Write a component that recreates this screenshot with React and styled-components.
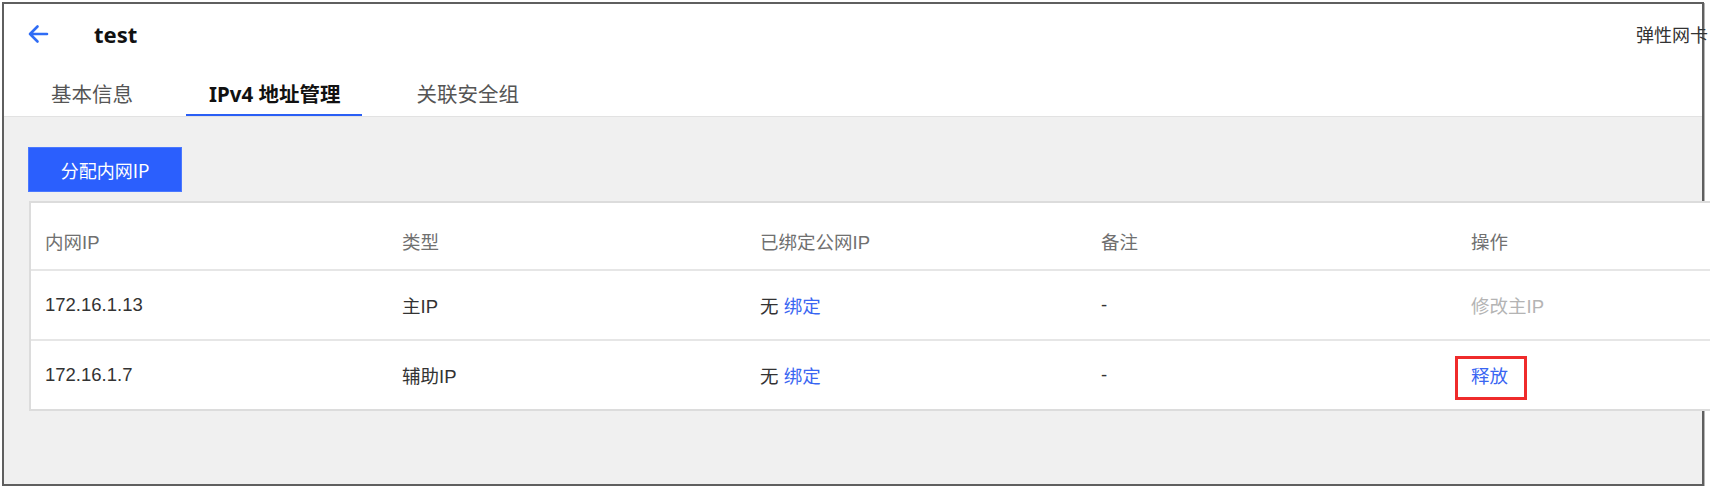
import styled, {createGlobalStyle} from "styled-components";

const GlobalStyle = createGlobalStyle`
    body {
        margin: 0;
        background: #ffffff;
        font-family: "Liberation Sans", "Noto Sans CJK SC", sans-serif;
        overflow: hidden;
    }
`

const Frame = styled.div`
    margin: 2px 0 0 2px;
    width: 1702px;
    height: 484px;
    box-sizing: border-box;
    border: 2px solid #5f5f5f;
    box-shadow: 1px 1px 0 #b5b5b5;
    display: flex;
    flex-direction: column;
    background: #f0f0f0;
`
const Header = styled.div`
    background: #fff;
    border-bottom: 1px solid #e2e2e2;
    display: flex;
    flex-direction: column;
`
const TitleRow = styled.div`
    height: 60px;
    display: flex;
    align-items: center;
    padding-left: 23px;
    gap: 45px;
    .title{
        font-family: "Noto Sans", "Noto Sans CJK SC", sans-serif;
        font-weight: 700;
        font-size: 22px;
        color: #111;
        flex: 1;
    }
    .product{
        font-family: "Noto Sans CJK SC", sans-serif;
        font-size: 18px;
        color: #333;
        margin-right: -6px;
        white-space: nowrap;
    }
`
const BackArrow = styled.svg`
    display: block;
    cursor: pointer;
`
const Tabs = styled.div`
    height: 52px;
    display: flex;
    padding-left: 24px;
    gap: 31px;
`
const Tab = styled.div`
    padding: 8px 22px 0 23px;
    display: flex;
    align-items: center;
    font-family: "Noto Sans", "Noto Sans CJK SC", sans-serif;
    font-size: 20.5px;
    font-weight: ${p => p.$active ? 700 : 400};
    color: ${p => p.$active ? "#111" : "#555"};
    border-bottom: 2px solid ${p => p.$active ? "#2a5ff5" : "transparent"};
    cursor: pointer;
`
const Content = styled.div`
    flex: 1;
    padding: 30px 0 0 24px;
    display: flex;
    flex-direction: column;
    align-items: flex-start;
    gap: 9px;
`
const PrimaryButton = styled.button`
    width: 154px;
    height: 45px;
    border: 1px solid #4a78ff;
    background: #2b5ffd;
    color: #fff;
    font-family: "Noto Sans CJK SC", sans-serif;
    font-size: 18px;
    cursor: pointer;
`
const Table = styled.div`
    margin-left: 1px;
    width: 1684px;
    background: #fff;
    border: 2px solid #dcdcdc;
    border-right: none;
`
const Row = styled.div`
    display: grid;
    grid-template-columns: 357px 358px 341px 370px 1fr;
    height: ${p => p.$head ? "66px" : "70px"};
    padding-top: ${p => p.$head ? "10px" : "0"};
    box-sizing: border-box;
    align-items: center;
    border-top: ${p => p.$head ? "none" : "2px solid #e6e6e6"};
    font-size: 18.5px;
    color: ${p => p.$head ? "#707070" : "#333"};
`
const Cell = styled.div`
    padding-left: 14px;
    font-family: "Liberation Sans", "Noto Sans CJK SC", sans-serif;
`
const Link = styled.span`
    color: ${p => p.$disabled ? "#b4b4b4" : "#3a66f2"};
    cursor: ${p => p.$disabled ? "not-allowed" : "pointer"};
    position: relative;
`
const Marked = styled(Link)`
    &::after{
        content: "";
        position: absolute;
        left: -16px;
        right: -19px;
        top: -10px;
        bottom: -13px;
        border: 3px solid #ef2b2b;
    }
`

const rows = [
    {ip: "172.16.1.13", type: "主IP", main: true},
    {ip: "172.16.1.7", type: "辅助IP", main: false},
]

function App(){
    return(
        <>
            <GlobalStyle/>
            <Frame>
                <Header>
                    <TitleRow>
                        <BackArrow width="22" height="20" viewBox="0 0 22 20">
                            <path d="M3 10 H20 M10.5 2.5 L3 10 L10.5 17.5" fill="none" stroke="#2f6cf5" strokeWidth="2.6" strokeLinecap="round" strokeLinejoin="round"/>
                        </BackArrow>
                        <span className="title">test</span>
                        <span className="product">弹性网卡</span>
                    </TitleRow>
                    <Tabs>
                        <Tab>基本信息</Tab>
                        <Tab $active>IPv4 地址管理</Tab>
                        <Tab>关联安全组</Tab>
                    </Tabs>
                </Header>
                <Content>
                    <PrimaryButton>分配内网IP</PrimaryButton>
                    <Table>
                        <Row $head>
                            <Cell>内网IP</Cell>
                            <Cell>类型</Cell>
                            <Cell>已绑定公网IP</Cell>
                            <Cell>备注</Cell>
                            <Cell>操作</Cell>
                        </Row>
                        {rows.map(r => (
                            <Row key={r.ip}>
                                <Cell>{r.ip}</Cell>
                                <Cell>{r.type}</Cell>
                                <Cell>无 <Link>绑定</Link></Cell>
                                <Cell>-</Cell>
                                <Cell>
                                    {r.main ? <Link $disabled>修改主IP</Link> : <Marked>释放</Marked>}
                                </Cell>
                            </Row>
                        ))}
                    </Table>
                </Content>
            </Frame>
        </>
    )
}

export default App;
